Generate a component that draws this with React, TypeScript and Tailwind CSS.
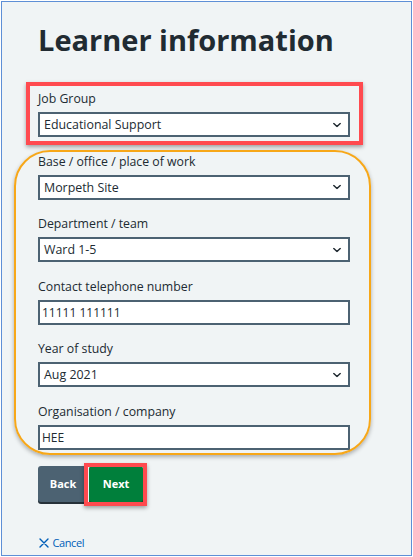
import React from "react";

type Field = {
  label: string;
  value: string;
  kind: "select" | "input";
};

const GROUPED: Field[] = [
  { label: "Base / office / place of work", value: "Morpeth Site", kind: "select" },
  { label: "Department / team", value: "Ward 1-5", kind: "select" },
  { label: "Contact telephone number", value: "11111 111111", kind: "input" },
  { label: "Year of study", value: "Aug 2021", kind: "select" },
  { label: "Organisation / company", value: "HEE", kind: "input" },
];

function Chevron() {
  return (
    <svg
      viewBox="0 0 10 6"
      className="pointer-events-none absolute right-[7px] top-1/2 h-[5px] w-[8px] -translate-y-1/2"
      fill="none"
      stroke="#212b32"
      strokeWidth="1.8"
      strokeLinecap="round"
      strokeLinejoin="round"
    >
      <path d="M1 1l4 4 4-4" />
    </svg>
  );
}

function FormField({ field, last }: { field: Field; last?: boolean }) {
  return (
    <div className={last ? "" : "mb-[15.5px]"}>
      <label className="mb-[4px] block text-[12.3px] leading-[18px] text-[#212b32]">
        {field.label}
      </label>
      {field.kind === "select" ? (
        <div className="relative h-[25px] w-full border-2 border-[#4c6272] bg-white">
          <div className="pl-[4px] text-[12.4px] leading-[21px] text-[#212b32]">
            {field.value}
          </div>
          <Chevron />
        </div>
      ) : (
        <input
          readOnly
          defaultValue={field.value}
          className="block h-[25px] w-full border-2 border-[#4c6272] bg-white px-[2px] text-[12px] leading-[21px] text-[#212b32] outline-none"
        />
      )}
    </div>
  );
}

export default function App() {
  return (
    <div
      className="h-[557px] w-[413px] bg-white p-px"
      style={{ fontFamily: '"Open Sans", "Noto Sans", sans-serif' }}
    >
      <div className="h-full border border-[#5e8fd6] bg-[#f0f4f5] pl-[36px] pt-[21px]">
        <h1 className="mb-[32.7px] text-[29px] font-bold leading-[1.2] text-[#212b32]">
          Learner information
        </h1>

        <div className="w-[312px]">
          {/* Job group, highlighted in red */}
          <div className="relative mb-[15.5px]">
            <div className="pointer-events-none absolute -bottom-[7.5px] -left-[12px] -right-[13px] -top-[8.5px] z-10 border-4 border-[#ff4a4f] shadow-[0_2px_4px_rgba(0,0,0,0.35)]" />
            <FormField field={{ label: "Job Group", value: "Educational Support", kind: "select" }} last />
          </div>

          {/* Remaining details, highlighted in orange */}
          <div className="relative">
            <div className="pointer-events-none absolute -bottom-[5.5px] -left-[24px] -right-[21px] -top-[2.5px] z-10 rounded-[36px] border-2 border-[#f7a718] shadow-[0_2px_4px_rgba(0,0,0,0.3)]" />
            {GROUPED.map((f, i) => (
              <FormField key={f.label} field={f} last={i === GROUPED.length - 1} />
            ))}
          </div>
        </div>

        <div className="mt-[16.4px] flex items-start gap-px">
          <button className="h-[36px] w-[50px] rounded-[3px] bg-[#4c6272] text-[11px] font-bold text-white shadow-[0_2px_0_#263139]">
            Back
          </button>
          <div className="relative">
            <button className="h-[36px] w-[54px] rounded-[3px] bg-[#007f3b] text-[11px] font-bold text-white shadow-[0_2px_0_#00401e]">
              Next
            </button>
            <div className="pointer-events-none absolute -bottom-[4px] -left-[5px] -right-[4px] -top-[3px] border-4 border-[#ff4a4f] shadow-[0_2px_4px_rgba(0,0,0,0.35)]" />
          </div>
        </div>

        <a className="mt-[33px] flex items-center gap-[3.5px] pl-px text-[11px] leading-[16px] tracking-[-0.4px] text-[#005eb8]">
          <svg viewBox="0 0 10 10" className="h-[10px] w-[10px]" fill="none" stroke="#005eb8" strokeWidth="1.4" strokeLinecap="round">
            <path d="M1 1l8 8M9 1l-8 8" />
          </svg>
          Cancel
        </a>
      </div>
    </div>
  );
}
